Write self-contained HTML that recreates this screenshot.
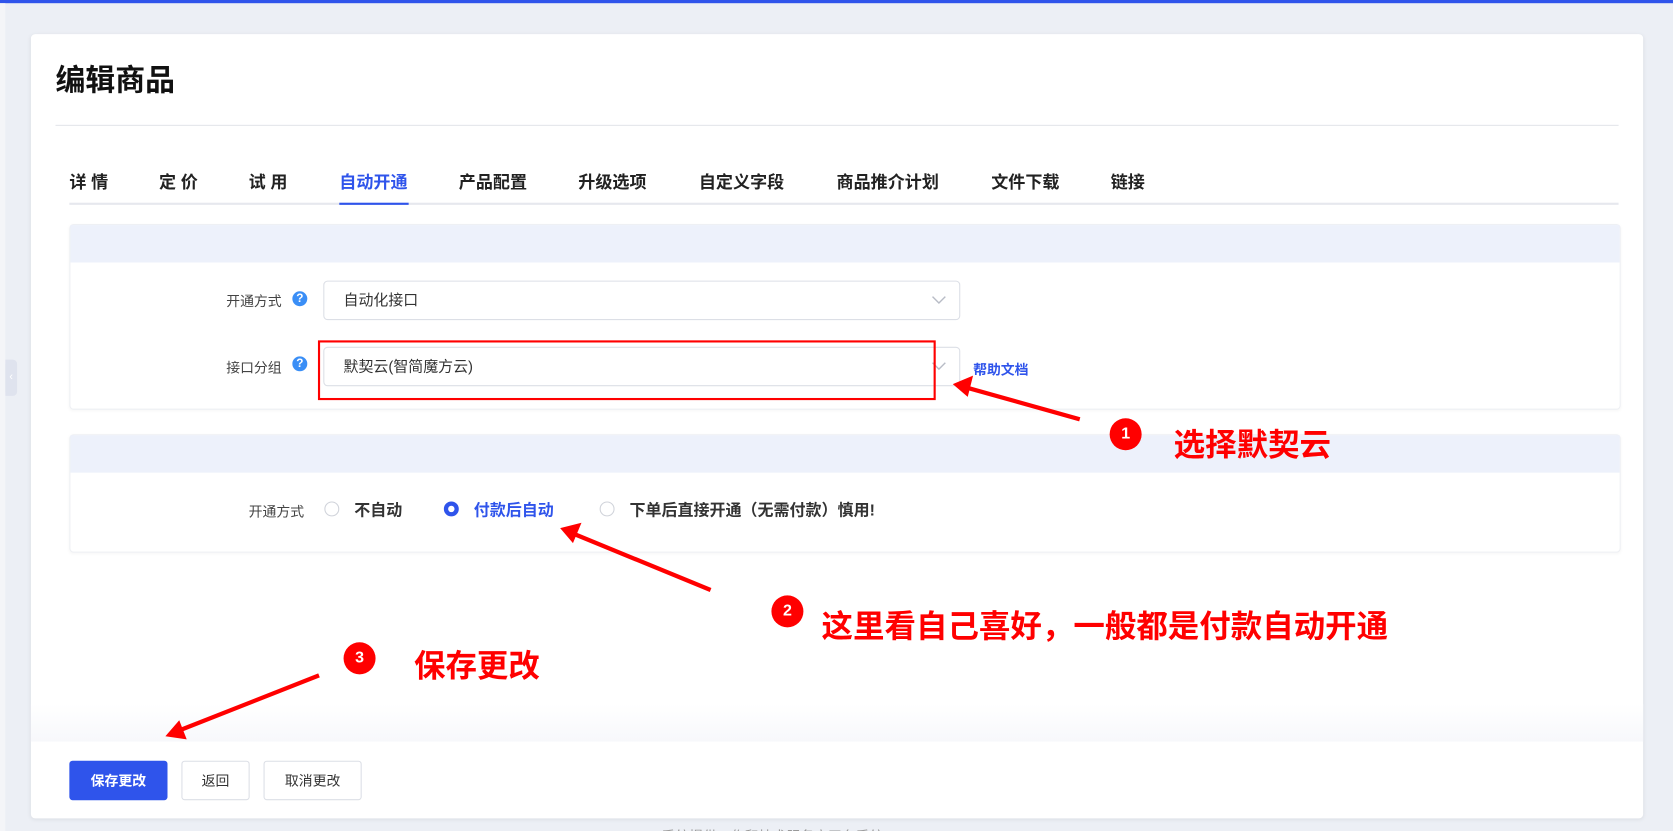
<!DOCTYPE html>
<html><head><meta charset="utf-8">
<style>
html,body{margin:0;padding:0;width:1673px;height:831px;overflow:hidden;background:#eceff5;}
#w{position:absolute;left:0;top:0;width:1568px;height:779px;transform:scale(1.06696);transform-origin:0 0;font-family:"Liberation Sans","Noto Sans CJK SC",sans-serif;color:#333;overflow:hidden;}
.a{position:absolute;}
.card{left:29px;top:32px;width:1511px;height:735px;background:#fff;border-radius:4px;box-shadow:0 1px 4px rgba(0,0,0,.08);}
.tab{top:157px;font-size:16px;font-weight:bold;color:#222;}
.panel{left:65px;width:1452px;background:#fff;border:1px solid #eef0f4;border-radius:4px;box-shadow:0 1px 3px rgba(0,0,0,.04);}
.ph{position:absolute;left:0;top:0;right:0;height:35px;background:#edf1fb;}
.lbl{font-size:13px;color:#444;}
.q{width:14px;height:14px;border-radius:50%;background:#3a8ef6;color:#fff;font-size:11px;font-weight:bold;text-align:center;line-height:14px;}
.sel{left:303px;width:597px;height:37px;border:1px solid #dcdfe6;border-radius:4px;box-sizing:border-box;font-size:14px;color:#333;line-height:35px;padding-left:18px;}
.chev{position:absolute;right:12px;top:12px;}
.rad{width:14px;height:14px;border-radius:50%;border:1px solid #d0d3da;box-sizing:border-box;}
.rt{font-size:15px;font-weight:bold;color:#333;}
.btn{top:713px;height:37px;border:1px solid #dcdfe6;border-radius:3px;box-sizing:border-box;font-size:13px;text-align:center;line-height:35px;color:#333;background:#fff;}
.red{color:#f00;font-weight:bold;font-size:29.5px;}
.num{width:30px;height:30px;border-radius:50%;background:#f00;color:#fff;font-size:15px;font-weight:bold;text-align:center;line-height:30px;}
</style></head><body>
<div id="w">
<div class="a" style="left:0;top:0;width:1568px;height:3px;background:#2f54eb"></div>
<div class="a" style="left:0;top:3px;width:5px;height:776px;background:#f4f5f8"></div>
<div class="a" style="left:5px;top:337px;width:11px;height:34px;background:#dfe3ee;border-radius:0 4px 4px 0;color:#fff;font-size:10px;line-height:34px;text-align:center">‹</div>
<div class="a card"></div>
<div class="a" style="left:52px;top:54px;font-size:28px;font-weight:bold;color:#111">编辑商品</div>
<div class="a" style="left:52px;top:117px;width:1465px;height:1px;background:#e3e5ea"></div>
<div class="a" style="left:65px;top:190px;width:1452px;height:2px;background:#e6e8ee"></div>
<div class="a tab" style="left:65px">详 情</div>
<div class="a tab" style="left:149px">定 价</div>
<div class="a tab" style="left:233px">试 用</div>
<div class="a tab" style="left:318px;color:#2f54eb">自动开通</div>
<div class="a" style="left:318px;top:190px;width:65px;height:2px;background:#2f54eb"></div>
<div class="a tab" style="left:430px">产品配置</div>
<div class="a tab" style="left:542px">升级选项</div>
<div class="a tab" style="left:655px">自定义字段</div>
<div class="a tab" style="left:784px">商品推介计划</div>
<div class="a tab" style="left:929px">文件下载</div>
<div class="a tab" style="left:1041px">链接</div>

<div class="a panel" style="top:210px;height:172px"><div class="ph"></div></div>
<div class="a lbl" style="left:212px;top:272px">开通方式</div>
<div class="a q" style="left:274px;top:273px">?</div>
<div class="a sel" style="top:263px">自动化接口<svg class="chev" width="14" height="10" viewBox="0 0 14 10"><path d="M1 2l6 6 6-6" fill="none" stroke="#b8bcc6" stroke-width="1.3"/></svg></div>
<div class="a lbl" style="left:212px;top:334px">接口分组</div>
<div class="a q" style="left:274px;top:334px">?</div>
<div class="a sel" style="top:325px">默契云(智简魔方云)<svg class="chev" width="14" height="10" viewBox="0 0 14 10"><path d="M1 2l6 6 6-6" fill="none" stroke="#b8bcc6" stroke-width="1.3"/></svg></div>
<div class="a" style="left:298px;top:319px;width:579px;height:56px;border:2px solid #f00;box-sizing:border-box"></div>
<div class="a" style="left:912px;top:336px;font-size:13px;font-weight:bold;color:#2f54eb">帮助文档</div>

<div class="a panel" style="top:407px;height:109px"><div class="ph"></div></div>
<div class="a lbl" style="left:233px;top:469px">开通方式</div>
<div class="a rad" style="left:304px;top:470px"></div>
<div class="a rt" style="left:332px;top:467px">不自动</div>
<div class="a rad" style="left:416px;top:470px;border:4px solid #2f54eb"></div>
<div class="a rt" style="left:444px;top:467px;color:#2f54eb">付款后自动</div>
<div class="a rad" style="left:562px;top:470px"></div>
<div class="a rt" style="left:590px;top:467px">下单后直接开通（无需付款）慎用!</div>

<div class="a" style="left:29px;top:660px;width:1511px;height:35px;background:linear-gradient(#fff,#f7f8fb)"></div>
<div class="a btn" style="left:65px;width:92px;background:#2f54eb;border-color:#2f54eb;color:#fff;font-weight:bold">保存更改</div>
<div class="a btn" style="left:170px;width:64px">返回</div>
<div class="a btn" style="left:247px;width:92px">取消更改</div>
<div class="a" style="left:620px;top:773px;font-size:13px;color:#999">系统提供工作和技术服务商平台系统</div>

<svg class="a" style="left:0;top:0" width="1568" height="779">
<g stroke="#f00" stroke-width="4" fill="#f00">
<line x1="1012" y1="393" x2="905" y2="363"/><polygon points="893,360 912,352 907,372" stroke="none"/>
<line x1="666" y1="553" x2="537" y2="500"/><polygon points="525,495 545,490 537,509" stroke="none"/>
<line x1="299" y1="633" x2="167" y2="685"/><polygon points="155,690 168,675 175,693" stroke="none"/>
</g></svg>
<div class="a num" style="left:1040px;top:392px">1</div>
<div class="a red" style="left:1100px;top:394px">选择默契云</div>
<div class="a num" style="left:723px;top:558px">2</div>
<div class="a red" style="left:770px;top:564px">这里看自己喜好，一般都是付款自动开通</div>
<div class="a num" style="left:322px;top:602px">3</div>
<div class="a red" style="left:388px;top:601px">保存更改</div>
</div>
</body></html>
